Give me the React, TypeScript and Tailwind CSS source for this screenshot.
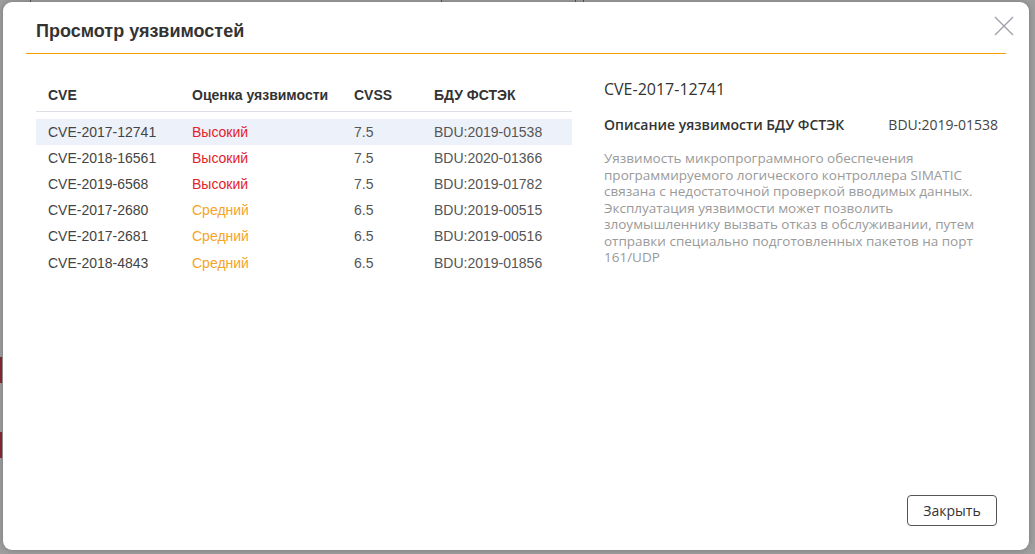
import React from "react";

const rows = [
  { cve: "CVE-2017-12741", level: "Высокий", high: true, cvss: "7.5", bdu: "BDU:2019-01538", active: true },
  { cve: "CVE-2018-16561", level: "Высокий", high: true, cvss: "7.5", bdu: "BDU:2020-01366" },
  { cve: "CVE-2019-6568", level: "Высокий", high: true, cvss: "7.5", bdu: "BDU:2019-01782" },
  { cve: "CVE-2017-2680", level: "Средний", high: false, cvss: "6.5", bdu: "BDU:2019-00515" },
  { cve: "CVE-2017-2681", level: "Средний", high: false, cvss: "6.5", bdu: "BDU:2019-00516" },
  { cve: "CVE-2018-4843", level: "Средний", high: false, cvss: "6.5", bdu: "BDU:2019-01856" },
];

const desc = [
  "Уязвимость микропрограммного обеспечения",
  "программируемого логического контроллера SIMATIC",
  "связана с недостаточной проверкой вводимых данных.",
  "Эксплуатация уязвимости может позволить",
  "злоумышленнику вызвать отказ в обслуживании, путем",
  "отправки специально подготовленных пакетов на порт",
  "161/UDP",
];

export default function App() {
  return (
    <div className="relative h-[554px] w-[1035px] overflow-hidden bg-[#9f9f9f] pl-[3px] pt-[2px]">
      {/* backdrop hints */}
      <div className="absolute left-0 top-[357px] h-[26px] w-[2px] bg-[#8a2a35]" />
      <div className="absolute left-0 top-[432px] h-[26px] w-[2px] bg-[#8a2a35]" />
      <div className="absolute left-[30px] top-0 h-[3px] w-[1px] bg-[#555]" />
      <div className="absolute left-[441px] top-0 h-[3px] w-[1px] bg-[#555]" />
      <div className="absolute left-[575px] top-0 h-[3px] w-[1px] bg-[#555]" />
      <div className="absolute left-[583px] top-0 h-[3px] w-[1px] bg-[#3a5a80]" />

      <div
        className="relative flex h-[548px] w-[1026px] flex-col rounded-[9px] bg-white shadow-[0_0_6px_rgba(0,0,0,0.25)]"
        style={{ fontFamily: '"Liberation Sans", Arial, sans-serif' }}
      >
        {/* header */}
        <div className="mx-[23px] h-[51px] pl-[10px] pt-[19px]">
          <h1 className="text-[18px] font-bold leading-[20px] text-[#333]">Просмотр уязвимостей</h1>
        </div>
        <div className="mx-[23px] h-[1px] bg-[#f5a000]" />
        <button className="absolute right-[14px] top-[13px] flex h-[22px] w-[22px] items-center justify-center text-[#9fa2ad]">
          <svg width="20" height="20" viewBox="0 0 20 20" fill="none" stroke="currentColor" strokeWidth="1.4">
            <path d="M1 1 L19 19 M19 1 L1 19" />
          </svg>
        </button>

        {/* body */}
        <div className="flex flex-1 gap-[32px] pl-[33px] pr-[31px] pt-[25px]">
          {/* table */}
          <div className="w-[536px] text-[14px] text-[#333]">
            <div className="flex h-[33px] items-center border-b border-[#dcdfe6] font-bold">
              <div className="w-[156px] pl-[12px]">CVE</div>
              <div className="w-[162px]">Оценка уязвимости</div>
              <div className="w-[80px]">CVSS</div>
              <div className="flex-1">БДУ ФСТЭК</div>
            </div>
            <div className="pt-[7px]">
              {rows.map((r) => (
                <div
                  key={r.cve}
                  className={`flex h-[26.2px] items-center ${r.active ? "bg-[#edf1f9]" : ""}`}
                >
                  <div className="w-[156px] pl-[12px] text-[#444]">{r.cve}</div>
                  <div className={`w-[162px] ${r.high ? "text-[#e3222b]" : "text-[#f5a425]"}`}>{r.level}</div>
                  <div className="w-[80px] text-[#555]">{r.cvss}</div>
                  <div className="flex-1 text-[#555]">{r.bdu}</div>
                </div>
              ))}
            </div>
          </div>

          {/* details */}
          <div
            className="flex-1 text-[#333]"
            style={{ fontFamily: '"Open Sans", "Noto Sans", sans-serif' }}
          >
            <div className="text-[16px] leading-[20px]">CVE-2017-12741</div>
            <div className="mt-[16px] flex items-center justify-between text-[14px] leading-[19px]">
              <span className="font-semibold">Описание уязвимости БДУ ФСТЭК</span>
              <span className="text-[#444]">BDU:2019-01538</span>
            </div>
            <div className="mt-[16px] text-[13.5px] leading-[16.5px] text-[#9a9a9a]">
              {desc.map((l) => (
                <div key={l} className="whitespace-nowrap">{l}</div>
              ))}
            </div>
          </div>
        </div>

        {/* footer */}
        <div className="flex justify-end pb-[24px] pr-[32px]">
          <button
            className="h-[31px] w-[90px] rounded-[4px] border border-[#555] text-[14px] text-[#333]"
            style={{ fontFamily: '"Open Sans", "Noto Sans", sans-serif' }}
          >
            Закрыть
          </button>
        </div>
      </div>
    </div>
  );
}
